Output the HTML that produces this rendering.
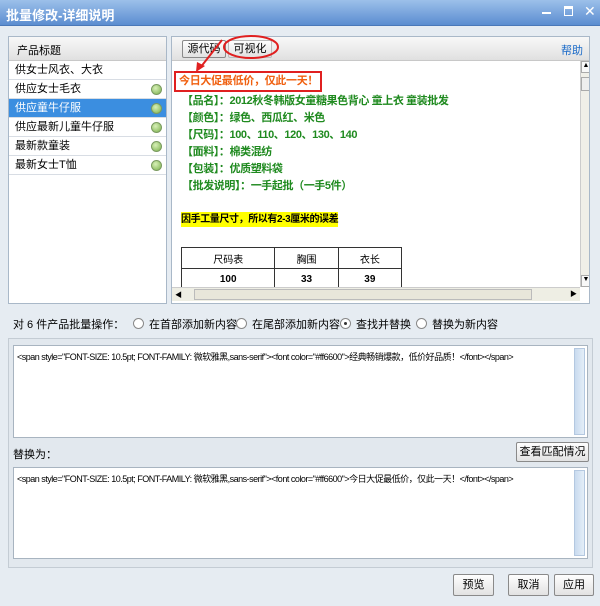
<!DOCTYPE html><html><head><meta charset="utf-8"><style>
*{margin:0;padding:0;box-sizing:border-box}
body{width:600px;height:606px;background:#e6ecf2;font-family:"Liberation Sans","Noto Sans CJK SC",sans-serif;font-size:11px;color:#000;position:relative;overflow:hidden}
.a{position:absolute;white-space:nowrap}
.title{left:0;top:0;width:600px;height:26px;background:linear-gradient(#9cc0ea,#5b8dd0);color:#fff;font-weight:bold;font-size:13px;padding:5px 6px;border-bottom:1px solid #4a78b8}
.panel{background:#fff;border:1px solid #a9b8c8}
.hdr{background:linear-gradient(#f8f8f8,#e0e0e0);border-bottom:1px solid #c8c8c8;height:24px}
.row{height:19px;line-height:19px;padding-left:6px;border-bottom:1px solid #d8dde4;position:relative;font-size:11px}
.row.sel{background:#3b8ee0;color:#fff}
.dot{position:absolute;right:4px;top:4px;width:11px;height:11px;border-radius:50%;background:radial-gradient(circle at 40% 35%,#d8f0b8,#7ab04a);border:1px solid #7a9a60}
.btn{background:linear-gradient(#fefefe,#e2e2e2);border:1px solid #8a8a8a;border-radius:2px;text-align:center;font-size:11px}
.g{color:#1f8a1f;font-size:11px;height:17px;line-height:17px;font-weight:bold;white-space:nowrap;letter-spacing:-0.4px}
.ta{background:#fff;border:1px solid #a8b4c0;font-size:9px;padding:4px 3px;letter-spacing:-0.5px;white-space:nowrap;overflow:hidden}
.vs{position:absolute;right:2px;top:2px;bottom:2px;width:11px;background:linear-gradient(90deg,#c9dbef,#e4eef8);border:1px solid #b4c8e0}
.rad{display:inline-block;width:11px;height:11px;border:1px solid #888;border-radius:50%;background:#fff;vertical-align:-1px;margin-right:5px;position:relative}
td{border:1px solid #333;text-align:center;font-size:10px;height:21px}
</style></head><body>
<div class="a title">批量修改-详细说明</div>
<div class="a" style="left:542px;top:12px;width:9px;height:2px;background:#fff"></div>
<div class="a" style="left:564px;top:6px;width:9px;height:10px;border:1px solid #fff;border-top-width:3px"></div>
<div class="a" style="left:584px;top:3px;color:#fff;font-size:14px">✕</div>

<div class="a panel" style="left:8px;top:36px;width:159px;height:268px">
<div class="hdr" style="padding:5px 8px">产品标题</div>
<div class="row">供女士风衣、大衣</div>
<div class="row">供应女士毛衣<span class="dot"></span></div>
<div class="row sel">供应童牛仔服<span class="dot"></span></div>
<div class="row">供应最新儿童牛仔服<span class="dot"></span></div>
<div class="row">最新款童装<span class="dot"></span></div>
<div class="row">最新女士T恤<span class="dot"></span></div>
</div>

<div class="a panel" style="left:171px;top:36px;width:419px;height:268px;overflow:hidden">
<div class="hdr" style="position:relative">
<div class="a btn" style="left:10px;top:3px;width:44px;height:18px;line-height:16px">源代码</div>
<div class="a btn" style="left:56px;top:3px;width:44px;height:18px;line-height:16px;border-color:#bbb">可视化</div>
<div class="a" style="right:6px;top:5px;color:#1a6ac8">帮助</div>
</div>
<div class="a" style="left:2px;top:34px;width:148px;height:21px;border:2px solid #e02020;color:#f06010;font-weight:bold;font-size:11px;line-height:17px;padding-left:3px;letter-spacing:-0.3px">今日大促最低价，仅此一天！</div>
<div class="a" style="left:10px;top:56px">
<div class="g">【品名】：2012秋冬韩版女童糖果色背心 童上衣 童装批发</div>
<div class="g">【颜色】：绿色、西瓜红、米色</div>
<div class="g">【尺码】：100、110、120、130、140</div>
<div class="g">【面料】：棉类混纺</div>
<div class="g">【包装】：优质塑料袋</div>
<div class="g">【批发说明】：一手起批（一手5件）</div>
</div>
<div class="a" style="left:9px;top:175px;background:#ff0;font-weight:bold;font-size:10px;line-height:15px;letter-spacing:-0.4px">因手工量尺寸，所以有2-3厘米的误差</div>
<table class="a" style="left:9px;top:210px;width:221px;border-collapse:collapse"><tr><td>尺码表</td><td>胸围</td><td>衣长</td></tr><tr><td><b>100</b></td><td><b>33</b></td><td><b>39</b></td></tr></table>
<div class="a" style="left:408px;top:24px;width:11px;height:226px;background:#f0efe8;border-left:1px solid #ccc"><div style="height:12px;border:1px solid #aaa;background:#f8f8f8;font-size:7px;text-align:center">▲</div><div style="height:14px;border:1px solid #aaa;background:#eee;margin-top:4px"></div><div style="position:absolute;bottom:0;width:10px;height:12px;border:1px solid #aaa;background:#f8f8f8;font-size:7px;text-align:center">▼</div></div>
<div class="a" style="left:0;top:250px;width:408px;height:14px;background:#eeeee4;border-top:1px solid #ccc"><span style="font-size:7px;margin-left:3px">◀</span><div class="a" style="left:22px;top:1px;width:338px;height:11px;background:#e8e6da;border:1px solid #bbb"></div><span class="a" style="right:3px;top:1px;font-size:7px">▶</span></div>
</div>
<svg class="a" style="left:0;top:0" width="300" height="80"><path d="M222 40 L200 68" stroke="#e02020" stroke-width="2"/><path d="M196 72 L197 62 L205 66Z" fill="#e02020"/><ellipse cx="251" cy="47" rx="27" ry="11" fill="none" stroke="#e02020" stroke-width="2"/></svg>

<div class="a" style="left:13px;top:316px">对 6 件产品批量操作：</div>
<div class="a" style="left:133px;top:316px"><span class="rad"></span>在首部添加新内容</div>
<div class="a" style="left:236px;top:316px"><span class="rad"></span>在尾部添加新内容</div>
<div class="a" style="left:340px;top:316px"><span class="rad"><span class="a" style="left:3px;top:3px;width:3px;height:3px;background:#333;border-radius:50%"></span></span>查找并替换</div>
<div class="a" style="left:416px;top:316px"><span class="rad"></span>替换为新内容</div>

<div class="a" style="left:8px;top:338px;width:585px;height:230px;border:1px solid #c4ccd4;background:#e2e8ee"></div>
<div class="a ta" style="left:13px;top:345px;width:575px;height:93px">&lt;span style="FONT-SIZE: 10.5pt; FONT-FAMILY: 微软雅黑,sans-serif"&gt;&lt;font color="#ff6600"&gt;经典畅销爆款，低价好品质！&lt;/font&gt;&lt;/span&gt;<div class="vs"></div></div>
<div class="a" style="left:13px;top:446px">替换为：</div>
<div class="a btn" style="left:516px;top:442px;width:73px;height:20px;line-height:18px">查看匹配情况</div>
<div class="a ta" style="left:13px;top:467px;width:575px;height:92px">&lt;span style="FONT-SIZE: 10.5pt; FONT-FAMILY: 微软雅黑,sans-serif"&gt;&lt;font color="#ff6600"&gt;今日大促最低价，仅此一天！&lt;/font&gt;&lt;/span&gt;<div class="vs"></div></div>

<div class="a btn" style="left:453px;top:574px;width:41px;height:22px;line-height:20px">预览</div>
<div class="a btn" style="left:508px;top:574px;width:41px;height:22px;line-height:20px">取消</div>
<div class="a btn" style="left:554px;top:574px;width:40px;height:22px;line-height:20px">应用</div>
</body></html>
